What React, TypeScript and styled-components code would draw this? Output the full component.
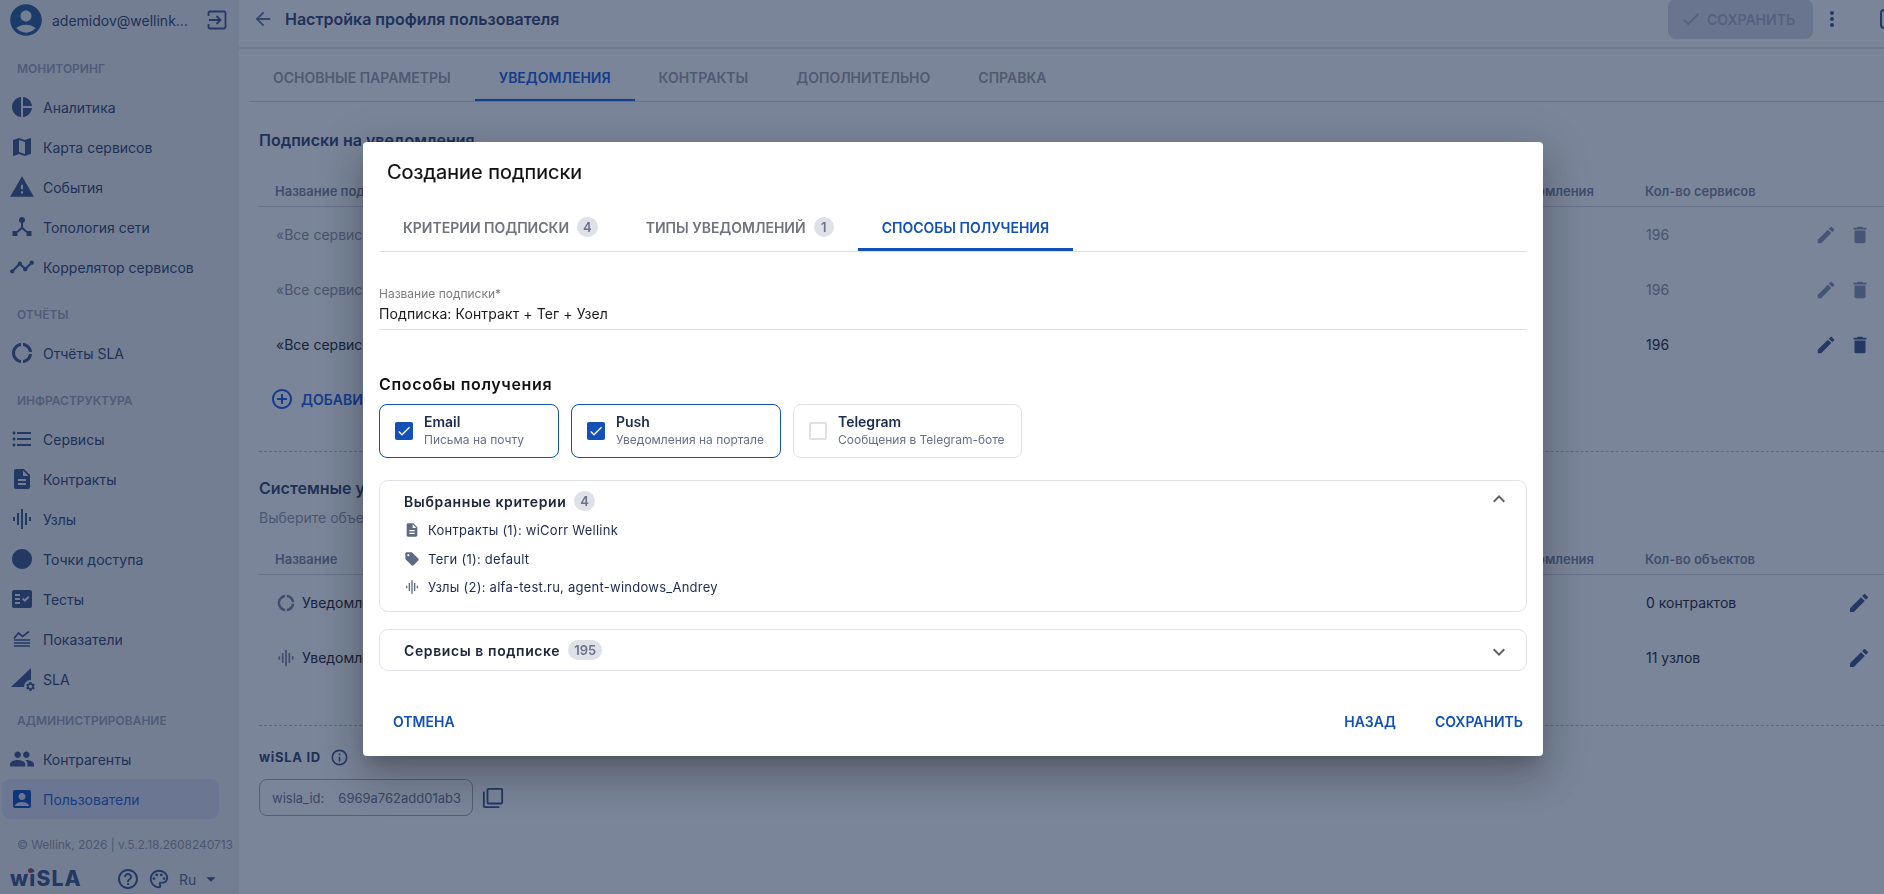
import React from 'react'
import styled, { createGlobalStyle } from 'styled-components'
import {
  MdAccountBox,
  MdAccountCircle,
  MdAddCircleOutline,
  MdArrowBack,
  MdArrowDropDown,
  MdCheck,
  MdCircle,
  MdDelete,
  MdDescription,
  MdDonutLarge,
  MdEdit,
  MdExpandLess,
  MdExpandMore,
  MdFactCheck,
  MdFilterNone,
  MdFormatListBulleted,
  MdGraphicEq,
  MdHelpOutline,
  MdInfoOutline,
  MdMap,
  MdMoreVert,
  MdOutlinePalette,
  MdPeople,
  MdPieChart,
  MdSell,
  MdSettings,
  MdTimeline,
  MdWarning,
} from 'react-icons/md'

const GlobalStyle = createGlobalStyle`
  html, body {
    margin: 0;
    height: 100%;
    overflow: hidden;
    font-family: 'Inter', 'Liberation Sans', sans-serif;
    background: #fff;
  }
  * { box-sizing: border-box; }
`

const TopologyIcon = () => (
  <svg width="22" height="22" viewBox="0 0 22 22" fill="currentColor">
    <circle cx="11" cy="4" r="3" />
    <rect x="1.5" y="15" width="5" height="5" />
    <rect x="15.5" y="15" width="5" height="5" />
    <path d="M10 6h2v5.2l4.6 4.2-1.4 1.400L11 13.200l-4.200 3.600-1.400-1.400L10 11.200z" />
  </svg>
)

const LogoutIcon = () => (
  <svg width="20" height="20" viewBox="0 0 20 20" fill="none" stroke="currentColor" strokeWidth="1.8">
    <path d="M1.500 6V3a1.500 1.500 0 0 1 1.500-1.500h14A1.500 1.500 0 0 1 18.500 3v14a1.500 1.500 0 0 1-1.500 1.500H3A1.500 1.500 0 0 1 1.500 17v-3" />
    <path d="M2 10h11M9.500 6l4 4-4 4" />
  </svg>
)

const MetricsIcon = () => (
  <svg width="20" height="20" viewBox="0 0 20 20" fill="none" stroke="currentColor" strokeWidth="1.7">
    <path d="M2 9.500 6.500 4l4 3.500L17 2.500" />
    <path d="M2 12h16M2 15h16M2 18h16" transform="translate(0 -1)" />
  </svg>
)

const SlaIcon = () => (
  <SlaWrap>
    <svg width="22" height="22" viewBox="0 0 22 22" fill="currentColor">
      <path d="M20 0v13a7 7 0 0 0-5 6H0z" />
    </svg>
    <SlaGear>
      <MdSettings size={11} />
    </SlaGear>
  </SlaWrap>
)

type MenuItem = { label: string; icon: React.ReactNode; active?: boolean }
type MenuGroup = { title: string; items: MenuItem[] }

const menu: MenuGroup[] = [
  {
    title: 'Мониторинг',
    items: [
      { label: 'Аналитика', icon: <MdPieChart size={24} /> },
      { label: 'Карта сервисов', icon: <MdMap size={24} /> },
      { label: 'События', icon: <MdWarning size={26} /> },
      { label: 'Топология сети', icon: <TopologyIcon /> },
      { label: 'Коррелятор сервисов', icon: <MdTimeline size={26} /> },
    ],
  },
  { title: 'Отчёты', items: [{ label: 'Отчёты SLA', icon: <MdDonutLarge size={24} /> }] },
  {
    title: 'Инфраструктура',
    items: [
      { label: 'Сервисы', icon: <MdFormatListBulleted size={24} /> },
      { label: 'Контракты', icon: <MdDescription size={24} /> },
      { label: 'Узлы', icon: <MdGraphicEq size={24} /> },
      { label: 'Точки доступа', icon: <MdCircle size={24} /> },
      { label: 'Тесты', icon: <MdFactCheck size={24} /> },
      { label: 'Показатели', icon: <MetricsIcon /> },
      { label: 'SLA', icon: <SlaIcon /> },
    ],
  },
  {
    title: 'Администрирование',
    items: [
      { label: 'Контрагенты', icon: <MdPeople size={26} /> },
      { label: 'Пользователи', icon: <MdAccountBox size={24} />, active: true },
    ],
  },
]

const pageTabs = ['Основные параметры', 'Уведомления', 'Контракты', 'Дополнительно', 'Справка']

const App = () => {
  return (
    <>
      <GlobalStyle />
      <Page>
        <Sidebar>
          <UserRow>
            <Avatar>
              <MdAccountCircle size={38} />
            </Avatar>
            <UserName>ademidov@wellink…</UserName>
            <LogoutButton>
              <LogoutIcon />
            </LogoutButton>
          </UserRow>

          {menu.map((group) => (
            <MenuSection key={group.title}>
              <SectionTitle>{group.title}</SectionTitle>
              {group.items.map((item) => (
                <MenuRow key={item.label} $active={item.active}>
                  <MenuIcon $active={item.active}>{item.icon}</MenuIcon>
                  {item.label}
                </MenuRow>
              ))}
            </MenuSection>
          ))}

          <Copyright>© Wellink, 2026 | v.5.2.18.2608240713</Copyright>
          <SidebarFooter>
            <Logo>
              wiSLA
              <LogoDot />
            </Logo>
            <FooterIcons>
              <MdHelpOutline size={24} />
              <MdOutlinePalette size={22} />
              <LangLabel>Ru</LangLabel>
              <MdArrowDropDown size={22} />
            </FooterIcons>
          </SidebarFooter>
        </Sidebar>

        <Main>
          <Header>
            <BackIcon>
              <MdArrowBack size={22} />
            </BackIcon>
            <PageTitle>Настройка профиля пользователя</PageTitle>
            <SaveButton>
              <MdCheck size={22} />
              Сохранить
            </SaveButton>
            <DotsIcon>
              <MdMoreVert size={24} />
            </DotsIcon>
            <ClippedIcon />
          </Header>

          <PageTabs>
            {pageTabs.map((tab) => (
              <PageTab key={tab} $active={tab === 'Уведомления'}>
                {tab}
              </PageTab>
            ))}
          </PageTabs>

          <Content>
            <BlockTitle>Подписки на уведомления</BlockTitle>
            <TableHead>
              <span>Название подписки</span>
              <span>Способы получения уведомления</span>
              <span>Кол-во сервисов</span>
            </TableHead>
            <TableRow $faded>
              <span>«Все сервисы»</span>
              <span />
              <span>196</span>
              <RowActions>
                <MdEdit size={22} />
                <MdDelete size={22} />
              </RowActions>
            </TableRow>
            <TableRow $faded>
              <span>«Все сервисы»</span>
              <span />
              <span>196</span>
              <RowActions>
                <MdEdit size={22} />
                <MdDelete size={22} />
              </RowActions>
            </TableRow>
            <TableRow>
              <span>«Все сервисы»</span>
              <span />
              <span>196</span>
              <RowActions>
                <MdEdit size={22} />
                <MdDelete size={22} />
              </RowActions>
            </TableRow>
            <AddRow>
              <MdAddCircleOutline size={24} />
              Добавить подписку
            </AddRow>
            <DashedLine $top={25} $bottom={24} />

            <BlockTitle>Системные уведомления</BlockTitle>
            <BlockHint>Выберите объекты для получения системных уведомлений</BlockHint>
            <TableHead>
              <span>Название</span>
              <span>Способы получения уведомления</span>
              <span>Кол-во объектов</span>
            </TableHead>
            <TableRow>
              <RowName>
                <MdDonutLarge size={20} />
                Уведомления о контрактах
              </RowName>
              <span />
              <span>0 контрактов</span>
              <RowActions>
                <span />
                <MdEdit size={24} />
              </RowActions>
            </TableRow>
            <TableRow>
              <RowName>
                <MdGraphicEq size={20} />
                Уведомления об узлах
              </RowName>
              <span />
              <span>11 узлов</span>
              <RowActions>
                <span />
                <MdEdit size={24} />
              </RowActions>
            </TableRow>
            <DashedLine $top={40} $bottom={21} />

            <IdTitle>
              wiSLA ID
              <MdInfoOutline size={19} />
            </IdTitle>
            <IdRow>
              <IdField>
                <span>wisla_id:</span>
                <span>6969a762add01ab3</span>
              </IdField>
              <MdFilterNone size={22} />
            </IdRow>
          </Content>
        </Main>
      </Page>

      <Overlay>
        <Modal>
          <ModalTitle>Создание подписки</ModalTitle>
          <ModalTabs>
            <ModalTab>
              Критерии подписки <Badge>4</Badge>
            </ModalTab>
            <ModalTab>
              Типы уведомлений <Badge>1</Badge>
            </ModalTab>
            <ModalTab $active>Способы получения</ModalTab>
          </ModalTabs>

          <Field>
            <FieldLabel>Название подписки*</FieldLabel>
            <FieldValue>Подписка: Контракт + Тег + Узел</FieldValue>
          </Field>

          <GroupTitle>Способы получения</GroupTitle>
          <MethodRow>
            <MethodCard $checked $width={180}>
              <CheckBox $checked>
                <MdCheck size={16} />
              </CheckBox>
              <MethodText>
                <MethodName>Email</MethodName>
                <MethodHint>Письма на почту</MethodHint>
              </MethodText>
            </MethodCard>
            <MethodCard $checked $width={210}>
              <CheckBox $checked>
                <MdCheck size={16} />
              </CheckBox>
              <MethodText>
                <MethodName>Push</MethodName>
                <MethodHint>Уведомления на портале</MethodHint>
              </MethodText>
            </MethodCard>
            <MethodCard $width={229}>
              <CheckBox />
              <MethodText>
                <MethodName>Telegram</MethodName>
                <MethodHint>Сообщения в Telegram-боте</MethodHint>
              </MethodText>
            </MethodCard>
          </MethodRow>

          <Accordion>
            <AccordionHead>
              <AccordionTitle>Выбранные критерии</AccordionTitle>
              <Badge>4</Badge>
              <Chevron $up>
                <MdExpandLess size={24} />
              </Chevron>
            </AccordionHead>
            <CriteriaRow>
              <MdDescription size={16} />
              Контракты (1): wiCorr Wellink
            </CriteriaRow>
            <CriteriaRow>
              <MdSell size={16} />
              Теги (1): default
            </CriteriaRow>
            <CriteriaRow>
              <MdGraphicEq size={16} />
              Узлы (2): alfa-test.ru, agent-windows_Andrey
            </CriteriaRow>
          </Accordion>

          <Accordion $collapsed>
            <AccordionHead>
              <AccordionTitle>Сервисы в подписке</AccordionTitle>
              <Badge>195</Badge>
              <Chevron>
                <MdExpandMore size={24} />
              </Chevron>
            </AccordionHead>
          </Accordion>

          <ModalFooter>
            <TextButton>Отмена</TextButton>
            <FooterRight>
              <TextButton>Назад</TextButton>
              <TextButton>Сохранить</TextButton>
            </FooterRight>
          </ModalFooter>
        </Modal>
      </Overlay>
    </>
  )
}

const navy = '#33456f'
const iconNavy = '#3e548a'
const blue = '#1350b8'

const Page = styled.div`
  display: flex;
  width: 1884px;
  height: 894px;
  overflow: hidden;
  background: #fff;
`

const Sidebar = styled.aside`
  width: 239px;
  flex-shrink: 0;
  height: 894px;
  background: #f0f0f0;
  color: ${navy};
  font-size: 14px;
  display: flex;
  flex-direction: column;
`

const UserRow = styled.div`
  display: flex;
  align-items: center;
  height: 40px;
  margin-bottom: 2px;
  padding: 0 0 0 7px;
  color: ${iconNavy};
`

const Avatar = styled.div`
  width: 38px;
  height: 38px;
  display: flex;
  color: #2a5b95;
`

const UserName = styled.div`
  margin-left: 7px;
  width: 155px;
  color: ${navy};
  font-size: 14px;
  white-space: nowrap;
`

const LogoutButton = styled.div`
  display: flex;
  color: ${iconNavy};
`

const MenuSection = styled.section`
  padding: 0 20px 0 2px;
  margin-bottom: 1px;

  &:nth-of-type(3) {
    margin-bottom: -5px;
  }
`

const SectionTitle = styled.div`
  height: 45px;
  padding: 17px 0 0 15px;
  font-size: 12px;
  line-height: 20px;
  font-weight: 600;
  text-transform: uppercase;
  color: #9ea2b6;
`

const MenuRow = styled.div<{ $active?: boolean }>`
  display: flex;
  align-items: center;
  height: 40px;
  padding-left: 7px;
  border-radius: 8px;
  font-size: 14px;
  background: ${({ $active }) => ($active ? '#dce0f0' : 'transparent')};
  color: ${({ $active }) => ($active ? '#2a5fcb' : navy)};
`

const MenuIcon = styled.span<{ $active?: boolean }>`
  width: 34px;
  height: 26px;
  flex-shrink: 0;
  display: flex;
  align-items: center;
  justify-content: center;
  padding-right: 8px;
  color: ${({ $active }) => ($active ? blue : iconNavy)};
`

const SlaWrap = styled.span`
  position: relative;
  display: flex;
`

const SlaGear = styled.span`
  position: absolute;
  right: -4px;
  bottom: -3px;
  display: flex;
  padding: 1px;
  border-radius: 50%;
  background: #f0f0f0;
`

const Copyright = styled.div`
  margin-top: 15px;
  padding-left: 17px;
  font-size: 12px;
  line-height: 20px;
  letter-spacing: -0.07px;
  color: #9699a8;
  white-space: nowrap;
`

const SidebarFooter = styled.div`
  display: flex;
  align-items: center;
  margin-top: 11px;
  padding-left: 10px;
`

const Logo = styled.div`
  position: relative;
  width: 106px;
  font-size: 21px;
  line-height: 26px;
  font-weight: 800;
  letter-spacing: 1.2px;
  color: ${iconNavy};
`

const LogoDot = styled.i`
  position: absolute;
  left: 18px;
  top: 2px;
  width: 5px;
  height: 5px;
  border-radius: 50%;
  background: #a8455c;
`

const FooterIcons = styled.div`
  display: flex;
  align-items: center;
  gap: 8px;
  color: ${iconNavy};
`

const LangLabel = styled.span`
  margin-left: 1px;
  margin-right: -4px;
  font-size: 14px;
  color: #5a6a95;
`

const Main = styled.main`
  flex: 1;
  min-width: 0;
  height: 894px;
  color: #262631;
`

const Header = styled.header`
  display: flex;
  align-items: center;
  height: 49px;
  padding: 0 0 9px 13px;
  border-bottom: 2px solid #e3e3e3;
  overflow: hidden;
`

const BackIcon = styled.span`
  display: flex;
  color: #5f74a4;
`

const PageTitle = styled.h1`
  flex: 1;
  margin: 0 0 0 11px;
  font-size: 16px;
  line-height: 24px;
  font-weight: 600;
  color: ${navy};
`

const SaveButton = styled.div`
  display: flex;
  align-items: center;
  gap: 5px;
  width: 145px;
  height: 40px;
  padding-left: 12px;
  border-radius: 8px;
  background: #d7dce9;
  color: #a9b0c4;
  font-size: 14px;
  font-weight: 600;
  text-transform: uppercase;
`

const DotsIcon = styled.span`
  display: flex;
  margin-left: 7px;
  color: ${iconNavy};
`

const ClippedIcon = styled.span`
  flex-shrink: 0;
  width: 16px;
  height: 20px;
  margin-left: 36px;
  margin-right: -12px;
  border: 2px solid ${iconNavy};
  border-radius: 4px;
`

const PageTabs = styled.nav`
  display: flex;
  height: 53px;
  margin-left: 10px;
  border-bottom: 1px solid #d5d5d7;
`

const PageTab = styled.div<{ $active?: boolean }>`
  display: flex;
  align-items: center;
  padding: 4px 24px 0;
  font-size: 14px;
  font-weight: 600;
  text-transform: uppercase;
  color: ${({ $active }) => ($active ? '#1b5de3' : '#a09fa6')};
  box-shadow: ${({ $active }) => ($active ? 'inset 0 -2px 0 #1b5de3' : 'none')};
`

const Content = styled.div`
  padding: 26px 0 0 20px;
`

const BlockTitle = styled.h2`
  margin: 0;
  font-size: 16px;
  line-height: 24px;
  font-weight: 600;
  color: ${navy};
`

const BlockHint = styled.p`
  margin: 8px 0 0;
  font-size: 14px;
  line-height: 20px;
  color: #9699a8;
`

const tableColumns = '1044px 326px 1fr 92px'

const TableHead = styled.div`
  display: grid;
  grid-template-columns: ${tableColumns};
  height: 47px;
  align-items: end;
  padding: 0 0 5px 16px;
  border-bottom: 1px solid #d5d5d7;
  font-size: 13px;
  line-height: 20px;
  font-weight: 600;
  color: #7d859e;

  ${BlockTitle} + & {
    margin-top: 8px;
  }

  & > span:nth-child(2) {
    text-align: right;
    padding-right: 51px;
    margin-left: -326px;
  }
`

const TableRow = styled.div<{ $faded?: boolean }>`
  display: grid;
  grid-template-columns: ${tableColumns};
  align-items: center;
  height: 55px;
  padding-left: 17px;
  font-size: 14px;
  color: ${({ $faded }) => ($faded ? '#93939b' : '#262631')};

  svg {
    color: ${({ $faded }) => ($faded ? '#8a96b0' : iconNavy)};
  }
`

const RowName = styled.span`
  display: flex;
  align-items: center;
  gap: 6px;

  svg {
    color: #7d859e;
  }
`

const RowActions = styled.span`
  display: flex;
  gap: 12px;
  justify-content: flex-end;
  padding-right: 13px;
`

const AddRow = styled.div`
  display: flex;
  align-items: center;
  gap: 7px;
  height: 54px;
  padding-left: 11px;
  font-size: 14px;
  font-weight: 600;
  text-transform: uppercase;
  color: #1b5de3;
`

const DashedLine = styled.div<{ $top: number; $bottom: number }>`
  height: 0;
  margin: ${({ $top }) => $top}px 0 ${({ $bottom }) => $bottom}px;
  border-top: 1px dashed #bdbdc4;
`

const IdTitle = styled.div`
  display: flex;
  align-items: center;
  gap: 9px;
  font-size: 13px;
  line-height: 20px;
  font-weight: 700;
  letter-spacing: 0.7px;
  color: ${navy};

  svg {
    color: ${iconNavy};
  }
`

const IdRow = styled.div`
  display: flex;
  align-items: center;
  gap: 9px;
  margin-top: 12px;
  color: ${iconNavy};
`

const IdField = styled.div`
  display: flex;
  gap: 14px;
  align-items: center;
  width: 214px;
  height: 37px;
  padding: 0 12px;
  border: 1px solid #a9a9b5;
  border-radius: 8px;
  font-size: 13px;
  color: #73758a;
  white-space: nowrap;
`

const Overlay = styled.div`
  position: fixed;
  inset: 0;
  display: flex;
  align-items: flex-start;
  justify-content: flex-start;
  background: rgba(15, 33, 70, 0.55);
`

const Modal = styled.div`
  width: 1180px;
  height: 614px;
  margin: 142px 0 0 363px;
  padding: 0 16px;
  display: flex;
  flex-direction: column;
  background: #fff;
  border-radius: 4px;
  box-shadow: 0 11px 15px -7px rgba(0, 0, 0, 0.2), 0 24px 38px 3px rgba(0, 0, 0, 0.14), 0 9px 46px 8px rgba(0, 0, 0, 0.12);
  color: #111;
`

const ModalTitle = styled.h2`
  margin: 0;
  padding: 16px 8px 0;
  font-size: 20px;
  line-height: 28px;
  font-weight: 400;
  -webkit-text-stroke: 0.2px #111;
`

const ModalTabs = styled.div`
  display: flex;
  height: 66px;
  padding-top: 17px;
  border-bottom: 1px solid #dfdfe2;
`

const ModalTab = styled.div<{ $active?: boolean }>`
  display: flex;
  align-items: center;
  gap: 8px;
  height: 48px;
  padding: 0 24px;
  white-space: nowrap;
  font-size: 14px;
  font-weight: 600;
  text-transform: uppercase;
  color: ${({ $active }) => ($active ? blue : '#71737d')};
  box-shadow: ${({ $active }) => ($active ? `inset 0 -3px 0 ${blue}` : 'none')};
`

const Badge = styled.span`
  display: inline-flex;
  align-items: center;
  justify-content: center;
  min-width: 20px;
  height: 20px;
  padding: 0 6px;
  border-radius: 10px;
  background: #dfe1e8;
  color: #6c7389;
  font-size: 13px;
  font-weight: 600;
`

const Field = styled.div`
  margin-top: 34px;
  height: 44px;
  border-bottom: 1px solid #dfdfe2;
`

const FieldLabel = styled.div`
  font-size: 12px;
  line-height: 16px;
  color: #7b7b7b;
`

const FieldValue = styled.div`
  margin-top: 2px;
  font-size: 14px;
  line-height: 20px;
  letter-spacing: 0.1px;
  color: #1a1a1a;
`

const GroupTitle = styled.div`
  margin-top: 43px;
  font-size: 16px;
  line-height: 22px;
  font-weight: 600;
  letter-spacing: 0.65px;
  color: #111;
`

const MethodRow = styled.div`
  display: flex;
  gap: 12px;
  margin-top: 9px;
`

const MethodCard = styled.div<{ $checked?: boolean; $width: number }>`
  display: flex;
  align-items: center;
  gap: 11px;
  width: ${({ $width }) => $width}px;
  height: 54px;
  padding-left: 15px;
  border: 1px solid ${({ $checked }) => ($checked ? blue : '#e2e3e8')};
  border-radius: 8px;
`

const CheckBox = styled.span<{ $checked?: boolean }>`
  display: flex;
  align-items: center;
  justify-content: center;
  width: 18px;
  height: 18px;
  flex-shrink: 0;
  border-radius: 2px;
  color: #fff;
  background: ${({ $checked }) => ($checked ? blue : '#fff')};
  border: ${({ $checked }) => ($checked ? '0' : '2px solid #e0e1e7')};
`

const MethodText = styled.div`
  display: flex;
  flex-direction: column;
  gap: 2px;
  margin-top: -1px;
`

const MethodName = styled.div`
  font-size: 14px;
  line-height: 17px;
  font-weight: 600;
  color: #1c2c50;
`

const MethodHint = styled.div`
  font-size: 12px;
  line-height: 16px;
  color: #687089;
  white-space: nowrap;
`

const Accordion = styled.div<{ $collapsed?: boolean }>`
  height: ${({ $collapsed }) => ($collapsed ? '42px' : '132px')};
  margin-top: ${({ $collapsed }) => ($collapsed ? '17px' : '22px')};
  padding: 0 15px 0 24px;
  border: 1px solid #e2e3e8;
  border-radius: 9px;
`

const AccordionHead = styled.div`
  display: flex;
  align-items: center;
  gap: 8px;
  height: 40px;
`

const AccordionTitle = styled.div`
  font-size: 14px;
  font-weight: 600;
  letter-spacing: 0.6px;
  color: #20283c;
`

const Chevron = styled.span<{ $up?: boolean }>`
  display: flex;
  margin-left: auto;
  margin-top: ${({ $up }) => ($up ? '-4px' : '4px')};
  color: #5f6368;
`

const CriteriaRow = styled.div`
  display: flex;
  align-items: center;
  gap: 8px;
  height: 28px;
  font-size: 13px;
  letter-spacing: 0.25px;
  color: #1d2b4f;

  ${AccordionHead} + & {
    margin-top: -5px;
    margin-bottom: 1px;
  }

  svg {
    color: #5d6a85;
  }
`

const ModalFooter = styled.div`
  display: flex;
  justify-content: space-between;
  margin-top: 41px;
  padding: 0 4px 0 14px;
`

const FooterRight = styled.div`
  display: flex;
  gap: 39px;
`

const TextButton = styled.div`
  font-size: 14px;
  line-height: 20px;
  font-weight: 600;
  text-transform: uppercase;
  color: ${blue};
`

export default App
